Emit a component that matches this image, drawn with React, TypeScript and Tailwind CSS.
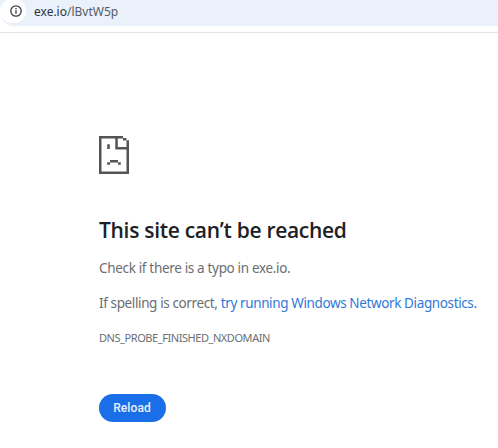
import React from 'react'

function InfoIcon() {
  return (
    <svg className="h-3 w-3" viewBox="0 0 12 12" fill="none">
      <circle cx="6" cy="6" r="5.2" stroke="#3c4043" strokeWidth="1.3" />
      <path d="M6 5.3v3.4M6 3v1.3" stroke="#3c4043" strokeWidth="1.4" />
    </svg>
  )
}

function SadPageIcon() {
  return (
    <svg className="block h-[38px] w-[30px]" viewBox="0 0 30 38" fill="#535457">
      <path d="M0 0h24v2.4H2.5v33.1h25V13.4H16.3V2h2.5v9h8.7V4.3H30V38H0z" />
      <path d="M24 2h3.4v2.5H24z" />
      <path d="M8.2 8.3h2.6V13H8.2zM11 24h8v2.4h-8zM8.2 26.2H11v2.6H8.2zM19 26.2h2.8v2.6H19z" />
    </svg>
  )
}

export default function App() {
  return (
    <div className="h-[448px] w-[498px] overflow-hidden bg-white font-['Noto_Sans','Open_Sans',sans-serif] text-[#6b6e72]">
      <header className="h-[33px] border-b border-[#e3e5e4]">
        <div className="flex h-[26px] items-start rounded-bl-[14px] bg-[#eaf1fb]">
          <div className="-mt-px flex h-6 w-[26px] shrink-0 items-center justify-center rounded-full bg-white pl-[5px]">
            <InfoIcon />
          </div>
          <div className="ml-2 whitespace-nowrap text-[12px] leading-[23px] text-[#555b65]">
            <span className="text-[#30343a]">exe.io</span>/lBvtW5p
          </div>
        </div>
      </header>

      <main className="whitespace-nowrap pl-[99px] pt-[103px]">
        <SadPageIcon />
        <h1 className="mt-[42px] font-['Open_Sans','Noto_Sans',sans-serif] text-[21px] font-semibold leading-[29px] tracking-[-0.3px] text-[#202124]">
          This site can’t be reached
        </h1>
        <p className="mt-[13px] text-[13.5px] leading-5 tracking-[-0.33px]">Check if there is a typo in exe.io.</p>
        <p className="mt-[15px] text-[13.5px] leading-5 tracking-[-0.38px]">
          If spelling is correct, <a className="text-[#2f79d6]">try running Windows Network Diagnostics</a>
          <span className="text-[#2f79d6]">.</span>
        </p>
        <p className="mt-4 text-[11px] leading-[17px] tracking-[-0.44px]">DNS_PROBE_FINISHED_NXDOMAIN</p>
        <button className="mt-12 flex h-7 w-[67px] items-center justify-center rounded-full bg-[#1a6fe8] pr-px font-['Roboto','Open_Sans',sans-serif] text-[12px] font-medium tracking-[0.1px] text-[#e9f1fd]">
          Reload
        </button>
      </main>
    </div>
  )
}
